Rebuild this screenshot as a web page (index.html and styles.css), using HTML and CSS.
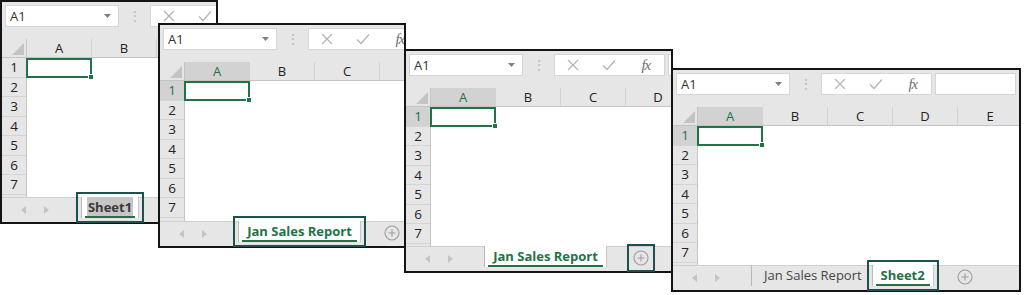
FILE: index.html
```html
<!DOCTYPE html>
<html lang="en">
<head>
  <meta charset="UTF-8" />
  <title>Renaming sheets</title>
  <link rel="stylesheet" href="styles.css">
</head>
<body>

  <div class="desk">

    <!-- step 1: default sheet -->
    <div class="win win-1 idle">
      <div class="toolbar">
        <div class="namebox">A1<svg class="caret" width="7" height="4" viewBox="0 0 7 4"><path d="M0 0h7L3.5 4z"/></svg></div>
        <div class="grip">⋮</div>
        <div class="fxbox">
          <span class="fxslot"><svg width="12" height="12" viewBox="0 0 12 12"><path d="M1 1l10 10M11 1L1 11"/></svg></span>
          <span class="fxslot"><svg width="14" height="12" viewBox="0 0 14 12"><path d="M1 6.5l4 4L13 1.5"/></svg></span>
          <span class="fxslot"></span>
        </div>
        <div class="formula"></div>
      </div>
      <div class="colheads">
        <div class="corner"></div>
        <div class="col">A</div><div class="col">B</div><div class="col"></div>
      </div>
      <div class="body">
        <div class="rowheads">
          <div class="rh">1</div><div class="rh">2</div><div class="rh">3</div><div class="rh">4</div>
          <div class="rh">5</div><div class="rh">6</div><div class="rh">7</div><div class="rh"></div>
        </div>
        <div class="cells"><div class="sel"><span class="handle"></span></div></div>
      </div>
      <div class="tabbar">
        <div class="nav">
          <svg width="5" height="8" viewBox="0 0 5 8"><path d="M5 0v8L0 4z"/></svg>
          <svg width="5" height="8" viewBox="0 0 5 8"><path d="M0 0v8l5-4z"/></svg>
        </div>
        <div class="tab active editing marked"><span class="hl">Sheet1</span></div>
      </div>
    </div>

    <!-- step 2: renamed -->
    <div class="win win-2">
      <div class="toolbar">
        <div class="namebox">A1<svg class="caret" width="7" height="4" viewBox="0 0 7 4"><path d="M0 0h7L3.5 4z"/></svg></div>
        <div class="grip">⋮</div>
        <div class="fxbox">
          <span class="fxslot"><svg width="12" height="12" viewBox="0 0 12 12"><path d="M1 1l10 10M11 1L1 11"/></svg></span>
          <span class="fxslot"><svg width="14" height="12" viewBox="0 0 14 12"><path d="M1 6.5l4 4L13 1.5"/></svg></span>
          <span class="fxslot fx">fx</span>
        </div>
        <div class="formula"></div>
      </div>
      <div class="colheads">
        <div class="corner"></div>
        <div class="col on">A</div><div class="col">B</div><div class="col">C</div><div class="col"></div>
      </div>
      <div class="body">
        <div class="rowheads">
          <div class="rh on">1</div><div class="rh">2</div><div class="rh">3</div><div class="rh">4</div>
          <div class="rh">5</div><div class="rh">6</div><div class="rh">7</div><div class="rh"></div>
        </div>
        <div class="cells"><div class="sel"><span class="handle"></span></div></div>
      </div>
      <div class="tabbar">
        <div class="nav">
          <svg width="5" height="8" viewBox="0 0 5 8"><path d="M5 0v8L0 4z"/></svg>
          <svg width="5" height="8" viewBox="0 0 5 8"><path d="M0 0v8l5-4z"/></svg>
        </div>
        <div class="tab active long marked">Jan Sales Report</div>
        <div class="add"><svg width="16" height="16" viewBox="0 0 16 16"><circle cx="8" cy="8" r="7"/><path d="M8 4.5v7M4.5 8h7"/></svg></div>
      </div>
    </div>

    <!-- step 3: new sheet button -->
    <div class="win win-3">
      <div class="toolbar">
        <div class="namebox">A1<svg class="caret" width="7" height="4" viewBox="0 0 7 4"><path d="M0 0h7L3.5 4z"/></svg></div>
        <div class="grip">⋮</div>
        <div class="fxbox">
          <span class="fxslot"><svg width="12" height="12" viewBox="0 0 12 12"><path d="M1 1l10 10M11 1L1 11"/></svg></span>
          <span class="fxslot"><svg width="14" height="12" viewBox="0 0 14 12"><path d="M1 6.5l4 4L13 1.5"/></svg></span>
          <span class="fxslot fx">fx</span>
        </div>
        <div class="formula"></div>
      </div>
      <div class="colheads">
        <div class="corner"></div>
        <div class="col on">A</div><div class="col">B</div><div class="col">C</div><div class="col">D</div>
      </div>
      <div class="body">
        <div class="rowheads">
          <div class="rh on">1</div><div class="rh">2</div><div class="rh">3</div><div class="rh">4</div>
          <div class="rh">5</div><div class="rh">6</div><div class="rh">7</div><div class="rh"></div>
        </div>
        <div class="cells"><div class="sel"><span class="handle"></span></div></div>
      </div>
      <div class="tabbar">
        <div class="nav">
          <svg width="5" height="8" viewBox="0 0 5 8"><path d="M5 0v8L0 4z"/></svg>
          <svg width="5" height="8" viewBox="0 0 5 8"><path d="M0 0v8l5-4z"/></svg>
        </div>
        <div class="tab active long">Jan Sales Report</div>
        <div class="add marked"><svg width="16" height="16" viewBox="0 0 16 16"><circle cx="8" cy="8" r="7"/><path d="M8 4.5v7M4.5 8h7"/></svg></div>
      </div>
    </div>

    <!-- step 4: second sheet added -->
    <div class="win win-4">
      <div class="toolbar">
        <div class="namebox">A1<svg class="caret" width="7" height="4" viewBox="0 0 7 4"><path d="M0 0h7L3.5 4z"/></svg></div>
        <div class="grip">⋮</div>
        <div class="fxbox">
          <span class="fxslot"><svg width="12" height="12" viewBox="0 0 12 12"><path d="M1 1l10 10M11 1L1 11"/></svg></span>
          <span class="fxslot"><svg width="14" height="12" viewBox="0 0 14 12"><path d="M1 6.5l4 4L13 1.5"/></svg></span>
          <span class="fxslot fx">fx</span>
        </div>
        <div class="formula"></div>
      </div>
      <div class="colheads">
        <div class="corner"></div>
        <div class="col on">A</div><div class="col">B</div><div class="col">C</div><div class="col">D</div><div class="col">E</div>
      </div>
      <div class="body">
        <div class="rowheads">
          <div class="rh on">1</div><div class="rh">2</div><div class="rh">3</div><div class="rh">4</div>
          <div class="rh">5</div><div class="rh">6</div><div class="rh">7</div><div class="rh"></div>
        </div>
        <div class="cells"><div class="sel"><span class="handle"></span></div></div>
      </div>
      <div class="tabbar">
        <div class="nav">
          <svg width="5" height="8" viewBox="0 0 5 8"><path d="M5 0v8L0 4z"/></svg>
          <svg width="5" height="8" viewBox="0 0 5 8"><path d="M0 0v8l5-4z"/></svg>
        </div>
        <div class="tab">Jan Sales Report</div>
        <div class="tab active short marked">Sheet2</div>
        <div class="add"><svg width="16" height="16" viewBox="0 0 16 16"><circle cx="8" cy="8" r="7"/><path d="M8 4.5v7M4.5 8h7"/></svg></div>
      </div>
    </div>

  </div>

</body>
</html>
```

FILE: styles.css
```css
* {
  margin: 0;
  padding: 0;
  box-sizing: border-box;
}

html, body {
  background: #fff;
  font-family: 'Open Sans', 'Noto Sans', sans-serif;
  color: #333;
  overflow: hidden;
}

.desk {
  position: relative;
  width: 1024px;
  height: 295px;
}

/* each screenshot sits on the canvas where it was pasted */
.win {
  position: absolute;
  display: flex;
  flex-direction: column;
  background: #e6e6e6;
  border: 2px solid #141414;
}

.win-1 { left: 0; top: 0; width: 218px; height: 224px; z-index: 1; }
.win-2 { left: 158px; top: 23px; width: 248px; height: 225px; z-index: 2; }
.win-3 { left: 404px; top: 49px; width: 269px; height: 224px; z-index: 3; }
.win-4 { left: 671px; top: 68px; width: 350px; height: 224px; z-index: 4; }

/* formula bar */
.toolbar {
  display: flex;
  flex-shrink: 0;
  height: 37px;
  padding: 3px 3px 12px 3px;
  overflow: hidden;
}

.namebox {
  display: flex;
  align-items: center;
  justify-content: space-between;
  flex-shrink: 0;
  width: 114px;
  height: 22px;
  padding: 0 7px 0 4px;
  background: #fff;
  border: 1px solid #d6d6d6;
  font-size: 13px;
  color: #333;
}

.caret path { fill: #808080; }

.grip {
  flex-shrink: 0;
  width: 31px;
  text-align: center;
  font-size: 14px;
  line-height: 22px;
  color: #bdbdbd;
}

.fxbox {
  display: flex;
  align-items: center;
  flex-shrink: 0;
  width: 111px;
  height: 22px;
  background: #fff;
  border: 1px solid #d6d6d6;
}

.fxslot {
  display: flex;
  align-items: center;
  justify-content: center;
  width: 37px;
}

.fxslot path {
  fill: none;
  stroke: #b4b4b4;
  stroke-width: 1.3;
}

.fx {
  font-family: 'Liberation Serif', serif;
  font-style: italic;
  font-size: 15px;
  color: #6e6e6e;
  letter-spacing: -1px;
}

.formula {
  flex: 1 0 60px;
  height: 22px;
  margin-left: 3px;
  background: #fff;
  border: 1px solid #d6d6d6;
}

/* column and row headings */
.colheads {
  display: flex;
  flex-shrink: 0;
  height: 19px;
  border-bottom: 1px solid #c4c4c4;
  overflow: hidden;
}

.corner {
  position: relative;
  flex-shrink: 0;
  width: 25px;
  border-right: 1px solid #c4c4c4;
}

.corner::after {
  content: '';
  position: absolute;
  right: 2px;
  bottom: 2px;
  border-style: solid;
  border-width: 0 0 12px 12px;
  border-color: transparent transparent #c3c3c3 transparent;
}

.col {
  flex-shrink: 0;
  width: 65px;
  border-right: 1px solid #d2d2d2;
  text-align: center;
  font-size: 13px;
  line-height: 18px;
  color: #222;
}

.col.on {
  background: #d2d2d2;
  color: #217346;
}

.body {
  display: flex;
  flex: 1;
  min-height: 0;
  overflow: hidden;
}

.rowheads {
  flex-shrink: 0;
  width: 25px;
  border-right: 1px solid #c4c4c4;
}

.rh {
  height: 19.5px;
  border-bottom: 1px solid #d4d4d4;
  text-align: center;
  font-size: 13.5px;
  line-height: 19px;
  color: #222;
}

.rh.on {
  background: #d2d2d2;
  color: #217346;
}

.cells {
  flex: 1;
  background: #fff;
}

.sel {
  position: relative;
  width: 66px;
  height: 20px;
  margin-left: -1px;
  border: 2px solid #217346;
}

.handle {
  position: absolute;
  right: -4px;
  bottom: -4px;
  width: 6px;
  height: 6px;
  background: #217346;
  border: 1px solid #fff;
}

/* sheet tabs */
.tabbar {
  display: flex;
  flex-shrink: 0;
  height: 25px;
  border-top: 1px solid #cfcfcf;
}

.nav {
  display: flex;
  align-items: center;
  flex-shrink: 0;
  width: 78px;
  height: 23px;
  padding-left: 19px;
  gap: 18px;
}

.nav path { fill: #c4c4c4; }

.tab {
  flex-shrink: 0;
  height: 21px;
  margin-top: -1px;
  padding: 0 8px 0 12px;
  border-left: 1px solid #b8b8b8;
  font-size: 13px;
  line-height: 21px;
  color: #444;
  white-space: nowrap;
}

.tab.active {
  position: relative;
  padding: 0;
  background: #fff;
  border-right: 1px solid #c8c8c8;
  text-align: center;
  font-weight: 700;
  color: #217346;
}

.tab.active::after {
  content: '';
  position: absolute;
  left: 3px;
  right: 3px;
  bottom: 0;
  height: 2px;
  background: #217346;
}

.tab.long { width: 123px; }
.tab.short { width: 62px; margin-left: 2px; }

.win-1 .tab.active { width: 58px; margin-left: 1px; }

.editing { color: #3a3a3a; }

.hl {
  padding: 1px 1px;
  background: #c6c6c6;
  color: #3a3a3a;
}

.add {
  display: flex;
  align-items: center;
  justify-content: center;
  flex-shrink: 0;
  width: 18px;
  height: 18px;
  margin: 2px 0 0 22px;
}

.add circle, .add path {
  fill: none;
  stroke: #9d9d9d;
  stroke-width: 1.1;
}

.win-3 .add { margin-left: 25px; }

/* the dark boxes drawn round the thing to click */
.marked {
  outline: 2px solid #1f5050;
  outline-offset: 3px;
}
```
